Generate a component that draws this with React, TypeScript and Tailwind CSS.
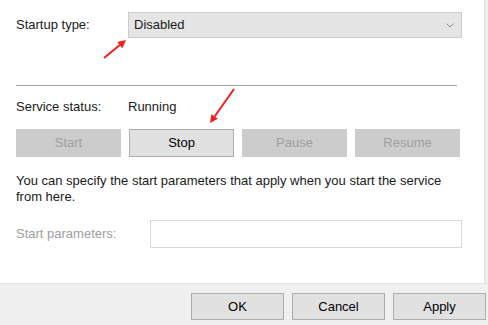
import React from 'react';

const font = { fontFamily: '"Liberation Sans", Arial, sans-serif' };

const ServiceButton = ({ label, disabled }: { label: string; disabled?: boolean }) => (
  <div
    className={
      disabled
        ? 'w-[105px] h-[28px] flex items-center justify-center bg-[#cccccc] border border-[#cccccc] text-[#9f9f9f]'
        : 'w-[105px] h-[28px] flex items-center justify-center bg-[#e1e1e1] border border-[#adadad] text-black'
    }
  >
    {label}
  </div>
);

const DialogButton = ({ label }: { label: string }) => (
  <div className="w-[93px] h-[27px] flex items-center justify-center bg-[#e1e1e1] border border-[#adadad] text-black">
    {label}
  </div>
);

const Arrow = ({ x1, y1, x2, y2 }: { x1: number; y1: number; x2: number; y2: number }) => {
  const a = Math.atan2(y2 - y1, x2 - x1);
  const len = 8;
  const w = 4;
  const bx = x2 - Math.cos(a) * len;
  const by = y2 - Math.sin(a) * len;
  const px = -Math.sin(a) * w;
  const py = Math.cos(a) * w;
  return (
    <>
      <line x1={x1} y1={y1} x2={bx} y2={by} stroke="#f21d1d" strokeWidth="2" />
      <polygon points={`${x2},${y2} ${bx + px},${by + py} ${bx - px},${by - py}`} fill="#f21d1d" />
    </>
  );
};

export default function App() {
  return (
    <div className="relative w-[488px] h-[325px] bg-[#f0f0f0] text-[13px] text-[#1a1a1a] overflow-hidden" style={font}>
      <div className="flex h-[283px]">
        <div className="w-[485px] bg-white border-r border-[#dcdcdc] pl-4 pt-[12px]">
          {/* startup type */}
          <div className="flex items-center h-[26px]">
            <div className="w-[112px]">Startup type:</div>
            <div className="w-[334px] h-[26px] bg-[#e5e5e5] border border-[#cccccc] flex items-center justify-between pl-[5px] pr-[7px]">
              <span>Disabled</span>
              <svg width="8" height="5" viewBox="0 0 8 5">
                <path d="M0.5 0.5 L4 4 L7.5 0.5" fill="none" stroke="#8a8a8a" strokeWidth="1" />
              </svg>
            </div>
          </div>

          <div className="mt-[47px] w-[441px] h-px bg-[#a0a0a0]" />

          {/* status */}
          <div className="flex items-center h-[16px] mt-[13px]">
            <div className="w-[112px]">Service status:</div>
            <div>Running</div>
          </div>

          <div className="flex gap-[8px] mt-[14px]">
            <ServiceButton label="Start" disabled />
            <ServiceButton label="Stop" />
            <ServiceButton label="Pause" disabled />
            <ServiceButton label="Resume" disabled />
          </div>

          <p className="mt-[16px] leading-[16px] w-[445px]">
            You can specify the start parameters that apply when you start the service from here.
          </p>

          <div className="flex items-center mt-[15px]">
            <div className="w-[134px] text-[#a0a0a0]">Start parameters:</div>
            <div className="w-[312px] h-[28px] bg-white border border-[#d9d9d9]" />
          </div>
        </div>
        <div className="flex-1" />
      </div>

      <div className="h-[42px] border-t border-[#e3e3e3] flex justify-end gap-[8px] pt-[9px] pr-[2px]">
        <DialogButton label="OK" />
        <DialogButton label="Cancel" />
        <DialogButton label="Apply" />
      </div>

      <svg className="absolute inset-0 pointer-events-none" width="488" height="325">
        <Arrow x1={104} y1={58} x2={126} y2={40} />
        <Arrow x1={234} y1={89} x2={210} y2={123} />
      </svg>
    </div>
  );
}
